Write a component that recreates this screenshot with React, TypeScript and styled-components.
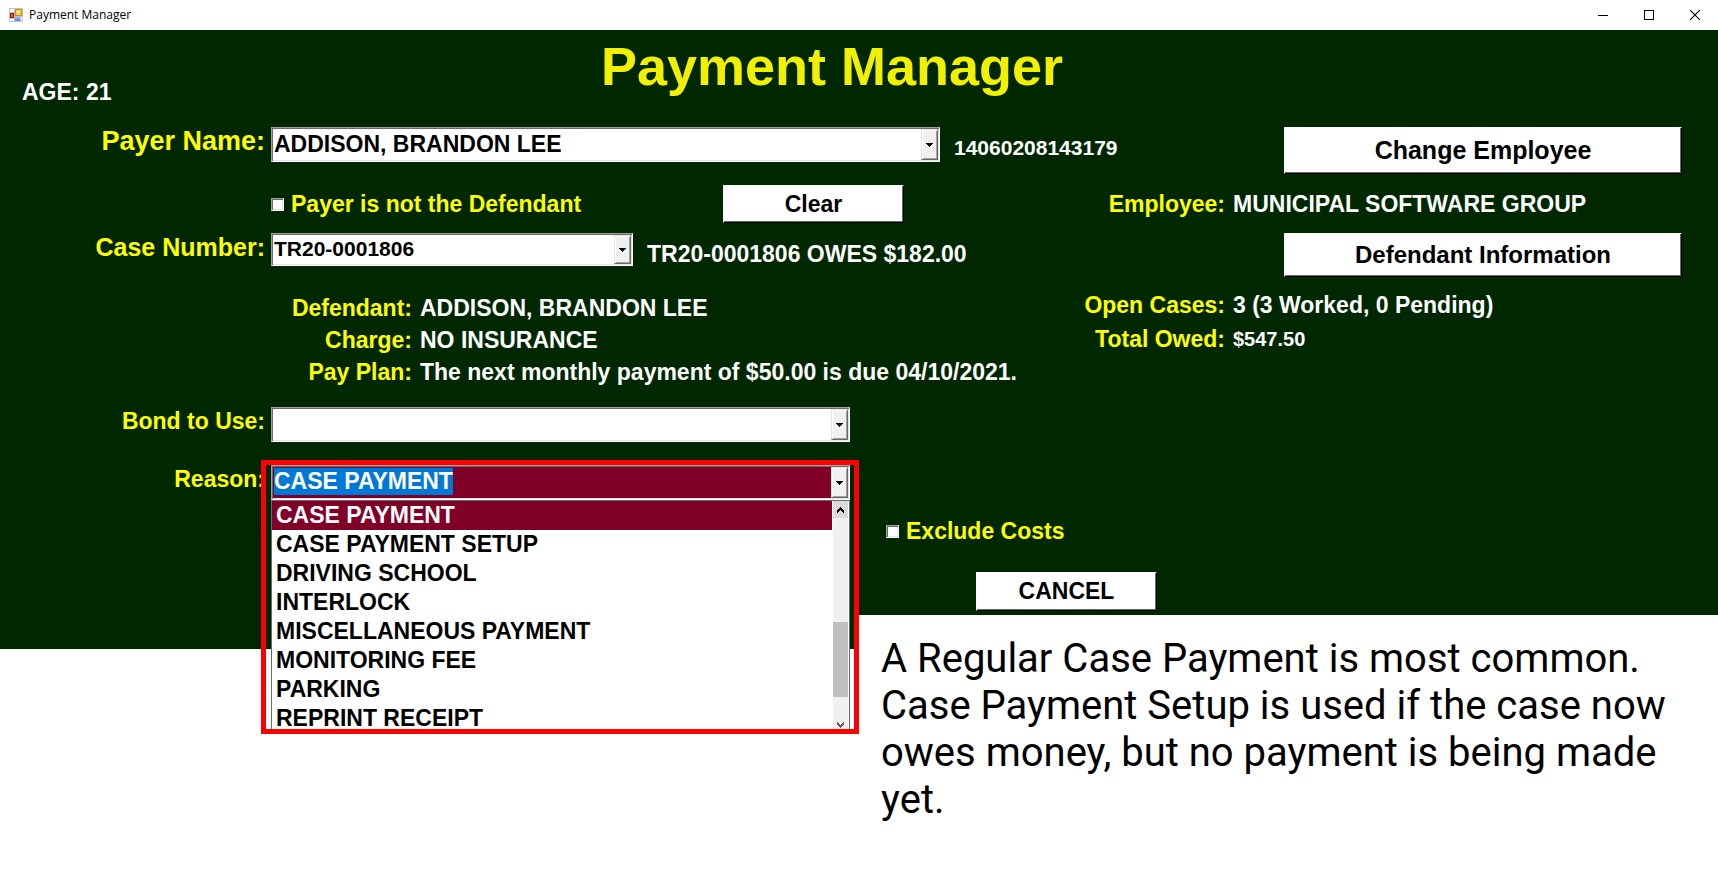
import React, { useEffect, useRef } from "react";
import styled, { createGlobalStyle, css } from "styled-components";

const GlobalStyle = createGlobalStyle`
  *, *::before, *::after { box-sizing: border-box; }
  body {
    margin: 0;
    background: #fff;
    font-family: "Liberation Sans", Arial, sans-serif;
  }
`;

const yellow = "#ffff00";
const green = "#002800";
const maroon = "#800028";

const sunken = css`
  border: 1px solid;
  border-color: #a0a0a0 #fff #fff #a0a0a0;
  box-shadow: inset 1px 1px 0 #696969, inset -1px -1px 0 #e3e3e3;
`;

const Page = styled.div`
  min-height: 100vh;
`;

const TitleBar = styled.header`
  display: flex;
  align-items: center;
  height: 30px;
  padding-left: 9px;
  background: #fff;
`;

const WindowTitle = styled.span`
  margin-left: 6px;
  font: 12px/16px "Open Sans", "Noto Sans", sans-serif;
  color: #000;
`;

const WindowControls = styled.div`
  display: flex;
  margin-left: auto;
  height: 28px;
`;

const WindowButton = styled.button`
  display: flex;
  align-items: center;
  justify-content: center;
  width: 46px;
  padding: 0;
  border: 0;
  background: transparent;
`;

const Form = styled.main`
  position: relative;
  height: 619px;
  padding-right: 36px;
  background: ${green};
  font-weight: 700;
  font-size: 23px;
  color: #fff;
`;

const Heading = styled.div`
  display: grid;
  grid-template-columns: 1fr auto 1fr;
  height: 97px;
  padding-right: 18px;
`;

const Age = styled.div`
  padding: 48px 0 0 22px;
  line-height: 28px;
`;

const Title = styled.h1`
  margin: 0;
  font-size: 54px;
  line-height: 72px;
  color: #f0f000;
`;

const Row = styled.div<{ $height: number; $gap: number }>`
  display: flex;
  align-items: flex-start;
  min-height: ${(p) => p.$height}px;
  margin-bottom: ${(p) => p.$gap}px;
`;

const FieldLabel = styled.label<{ $size?: number }>`
  flex: none;
  width: 271px;
  padding-right: 6px;
  text-align: right;
  font-size: ${(p) => p.$size ?? 23}px;
  line-height: 28px;
  color: ${yellow};
`;

const SideNote = styled.span<{ $size?: number }>`
  margin-left: 14px;
  font-size: ${(p) => p.$size ?? 23}px;
  line-height: 42px;
  white-space: nowrap;
`;

const ComboFrame = styled.div<{ $width: number; $height: number; $fill?: string }>`
  ${sunken}
  flex: none;
  display: grid;
  grid-template-columns: 1fr 17px;
  width: ${(p) => p.$width}px;
  height: ${(p) => p.$height}px;
  padding: 1px;
  background: ${(p) => p.$fill ?? "#fff"};
`;

const ComboSelect = styled.select<{ $size?: number }>`
  grid-area: 1 / 1 / 2 / 3;
  appearance: none;
  width: 100%;
  padding: 0 18px 2px 1px;
  border: 0;
  outline: 0;
  background: transparent;
  font: 700 ${(p) => p.$size ?? 23}px "Liberation Sans", Arial, sans-serif;
  color: #000;
`;

const ComboArrow = styled.span`
  grid-area: 1 / 2 / 2 / 3;
  display: flex;
  align-items: center;
  justify-content: center;
  border: 1px solid;
  border-color: #e3e3e3 #696969 #696969 #e3e3e3;
  box-shadow: inset 1px 1px 0 #fff, inset -1px -1px 0 #a0a0a0;
  background: #f0f0f0;
  pointer-events: none;
`;

const PushButton = styled.button<{ $width: number; $height: number; $size?: number }>`
  flex: none;
  width: ${(p) => p.$width}px;
  height: ${(p) => p.$height}px;
  padding: 0;
  border: 1px solid;
  border-color: #fff #000 #000 #fff;
  box-shadow: inset -1px -1px 0 #696969;
  background: #fff;
  font: 700 ${(p) => p.$size ?? 23}px "Liberation Sans", Arial, sans-serif;
  color: #000;
`;

const RightSlot = styled.div`
  display: flex;
  margin-left: auto;
`;

const CheckLabel = styled.label`
  display: flex;
  align-items: center;
  gap: 7px;
  line-height: 38px;
  color: ${yellow};
`;

const CheckBox = styled.input`
  ${sunken}
  appearance: none;
  width: 13px;
  height: 13px;
  margin: 0;
  background: #fff;
`;

const CheckSlot = styled.div`
  width: 452px;
  margin-left: 271px;
`;

const Facts = styled.dl<{ $label: number; $line: number }>`
  display: grid;
  grid-template-columns: ${(p) => p.$label}px 1fr;
  column-gap: 8px;
  margin: 0;
  line-height: ${(p) => p.$line}px;
  white-space: nowrap;
`;

const CaseFacts = styled(Facts)`
  padding-top: 4px;
`;

const AccountFacts = styled(Facts)`
  width: 598px;
  margin-left: auto;
`;

const Term = styled.dt`
  text-align: right;
  color: ${yellow};
`;

const Value = styled.dd<{ $size?: number }>`
  margin: 0;
  font-size: ${(p) => p.$size ?? 23}px;
`;

const ReasonField = styled.div`
  position: relative;
  z-index: 2;
  flex: none;
  width: 579px;
`;

const ReasonInput = styled.input`
  width: 100%;
  min-width: 0;
  height: 27px;
  margin: 1px 0 0 1px;
  padding: 0;
  border: 0;
  outline: 0;
  background: transparent;
  font: 700 23px "Liberation Sans", Arial, sans-serif;
  color: #fff;
  &::selection {
    background: #0078d7;
    color: #fff;
  }
`;

const DropDown = styled.div`
  position: absolute;
  top: 100%;
  left: 0;
  display: grid;
  grid-template-columns: 1fr 15px;
  column-gap: 1px;
  width: 100%;
  border: 1px solid #696969;
  border-width: 1px 1px 0 1px;
  padding-right: 1px;
  background: #fff;
`;

const OptionList = styled.ul`
  margin: 0;
  padding: 0;
  list-style: none;
`;

const Option = styled.li<{ $active: boolean }>`
  height: 29px;
  padding-left: 4px;
  line-height: 28px;
  background: ${(p) => (p.$active ? maroon : "#fff")};
  color: ${(p) => (p.$active ? "#fff" : "#000")};
`;

const ScrollBar = styled.div`
  display: flex;
  flex-direction: column;
  background: #f0f0f0;
`;

const ScrollButton = styled.button<{ $hot?: boolean }>`
  display: flex;
  align-items: center;
  justify-content: center;
  width: 15px;
  height: 17px;
  padding: 0;
  border: 0;
  background: ${(p) => (p.$hot ? "#dadada" : "#f0f0f0")};
`;

const ScrollThumb = styled.div`
  height: 75px;
  margin: 104px 0 19px;
  background: #c0c0c0;
`;

const Highlight = styled.div`
  position: absolute;
  top: -5px;
  left: -10px;
  width: 598px;
  height: 274px;
  border: 5px solid #ff0000;
  pointer-events: none;
`;

const Actions = styled.div`
  display: flex;
  flex-direction: column;
  gap: 22px;
  padding: 47px 0 0 36px;
`;

const CancelSlot = styled.div`
  padding-left: 90px;
`;

const Callout = styled.aside`
  position: absolute;
  top: calc(100% - 34px);
  left: 859px;
  right: 0;
  padding: 20px 30px 20px 22px;
  background: #fff;
  font: 400 40px/47px Roboto, sans-serif;
  color: #000;
`;

const reasons = [
  "CASE PAYMENT",
  "CASE PAYMENT SETUP",
  "DRIVING SCHOOL",
  "INTERLOCK",
  "MISCELLANEOUS PAYMENT",
  "MONITORING FEE",
  "PARKING",
  "REPRINT RECEIPT",
];

function DownArrow() {
  return (
    <ComboArrow aria-hidden="true">
      <svg width="7" height="4" viewBox="0 0 7 4" shapeRendering="crispEdges">
        <path d="M0 0h7v1h-1v1h-1v1h-1v1h-1v-1h-1v-1h-1v-1h-1z" fill="#000" />
      </svg>
    </ComboArrow>
  );
}

function Chevron({ down, color }: { down?: boolean; color: string }) {
  return (
    <svg width="7" height="6" viewBox="0 0 7 6" aria-hidden="true" shapeRendering="crispEdges">
      <path
        d={
          down
            ? "M0 0h1v1h1v1h1v1h1v-1h1v-1h1v-1h1v3h-1v1h-1v1h-1v1h-1v-1h-1v-1h-1v-1h-1z"
            : "M0 6v-3h1v-1h1v-1h1v-1h1v1h1v1h1v1h1v3h-1v-1h-1v-1h-1v-1h-1v1h-1v1h-1v1z"
        }
        fill={color}
      />
    </svg>
  );
}

interface ComboProps {
  id: string;
  value: string;
  width: number;
  height: number;
  size?: number;
}

function Combo({ id, value, width, height, size }: ComboProps) {
  return (
    <ComboFrame $width={width} $height={height}>
      <ComboSelect id={id} defaultValue={value} $size={size}>
        <option value={value}>{value}</option>
      </ComboSelect>
      <DownArrow />
    </ComboFrame>
  );
}

function AppIcon() {
  return (
    <svg width="14" height="14" viewBox="0 0 14 14" aria-hidden="true">
      <path d="M.5 .5h13v13h-13zM5.500 .5v13M.5 4.500h5M5.500 8.500h8M.5 10.500h5M11.500 8v5.500" fill="#fff" stroke="#c0c0c8" />
      <rect x="6.500" y="1.500" width="6" height="6" fill="#fbd04a" stroke="#c8900c" />
      <rect x="8" y="3" width="3" height="2" fill="#fdeaa0" />
      <rect x="1.500" y="5.500" width="3" height="4" fill="#e0584c" stroke="#a81810" />
      <rect x="6" y="9" width="5" height="4" fill="#5f8ce8" />
      <rect x="6" y="9" width="5" height="2" fill="#8ab0f6" />
    </svg>
  );
}

export default function App() {
  const reasonRef = useRef<HTMLInputElement>(null);

  useEffect(() => {
    reasonRef.current?.focus({ preventScroll: true });
    reasonRef.current?.select();
  }, []);

  return (
    <Page>
      <GlobalStyle />
      <TitleBar>
        <AppIcon />
        <WindowTitle>Payment Manager</WindowTitle>
        <WindowControls>
          <WindowButton aria-label="Minimize">
            <svg width="10" height="10" viewBox="0 0 10 10" shapeRendering="crispEdges">
              <path d="M0 5h10v1H0z" fill="#000" />
            </svg>
          </WindowButton>
          <WindowButton aria-label="Maximize">
            <svg width="10" height="10" viewBox="0 0 10 10" shapeRendering="crispEdges">
              <path d="M.5 .5h9v9h-9z" fill="none" stroke="#000" />
            </svg>
          </WindowButton>
          <WindowButton aria-label="Close">
            <svg width="10" height="10" viewBox="0 0 10 10">
              <path d="M0 0L10 10M10 0L0 10" fill="none" stroke="#000" strokeWidth="1.100" />
            </svg>
          </WindowButton>
        </WindowControls>
      </TitleBar>

      <Form>
        <Heading>
          <Age>AGE: 21</Age>
          <Title>Payment Manager</Title>
        </Heading>

        <Row $height={47} $gap={11}>
          <FieldLabel htmlFor="payer" $size={27}>Payer Name:</FieldLabel>
          <Combo id="payer" value="ADDISON, BRANDON LEE" width={669} height={35} />
          <SideNote $size={21}>14060208143179</SideNote>
          <RightSlot>
            <PushButton $width={398} $height={47} $size={25}>Change Employee</PushButton>
          </RightSlot>
        </Row>

        <Row $height={38} $gap={10}>
          <CheckSlot>
            <CheckLabel>
              <CheckBox type="checkbox" />
              Payer is not the Defendant
            </CheckLabel>
          </CheckSlot>
          <PushButton $width={181} $height={38}>Clear</PushButton>
          <AccountFacts $label={141} $line={38}>
            <Term>Employee:</Term>
            <Value>MUNICIPAL SOFTWARE GROUP</Value>
          </AccountFacts>
        </Row>

        <Row $height={44} $gap={11}>
          <FieldLabel htmlFor="case" $size={25}>Case Number:</FieldLabel>
          <Combo id="case" value="TR20-0001806" width={362} height={33} size={21} />
          <SideNote>TR20-0001806 OWES $182.00</SideNote>
          <RightSlot>
            <PushButton $width={398} $height={44} $size={24}>Defendant Information</PushButton>
          </RightSlot>
        </Row>

        <Row $height={100} $gap={19}>
          <CaseFacts $label={412} $line={32}>
            <Term>Defendant:</Term>
            <Value>ADDISON, BRANDON LEE</Value>
            <Term>Charge:</Term>
            <Value>NO INSURANCE</Value>
            <Term>Pay Plan:</Term>
            <Value>The next monthly payment of $50.00 is due 04/10/2021.</Value>
          </CaseFacts>
          <AccountFacts $label={141} $line={34}>
            <Term>Open Cases:</Term>
            <Value>3 (3 Worked, 0 Pending)</Value>
            <Term>Total Owed:</Term>
            <Value $size={20}>$547.50</Value>
          </AccountFacts>
        </Row>

        <Row $height={35} $gap={23}>
          <FieldLabel htmlFor="bond">Bond to Use:</FieldLabel>
          <Combo id="bond" value="" width={579} height={35} />
        </Row>

        <Row $height={35} $gap={0}>
          <FieldLabel htmlFor="reason">Reason:</FieldLabel>
          <ReasonField>
            <ComboFrame $width={579} $height={35} $fill={maroon}>
              <ReasonInput
                id="reason"
                ref={reasonRef}
                role="combobox"
                aria-expanded="true"
                aria-controls="reason-list"
                defaultValue="CASE PAYMENT"
              />
              <DownArrow />
            </ComboFrame>
            <DropDown>
              <OptionList id="reason-list" role="listbox" aria-label="Reason">
                {reasons.map((reason, index) => (
                  <Option key={reason} role="option" aria-selected={index === 0} $active={index === 0}>
                    {reason}
                  </Option>
                ))}
              </OptionList>
              <ScrollBar>
                <ScrollButton aria-label="Scroll up" $hot>
                  <Chevron color="#000" />
                </ScrollButton>
                <ScrollThumb />
                <ScrollButton aria-label="Scroll down">
                  <Chevron down color="#606060" />
                </ScrollButton>
              </ScrollBar>
            </DropDown>
            <Highlight />
          </ReasonField>
          <Actions>
            <CheckLabel>
              <CheckBox type="checkbox" />
              Exclude Costs
            </CheckLabel>
            <CancelSlot>
              <PushButton $width={181} $height={39}>CANCEL</PushButton>
            </CancelSlot>
          </Actions>
        </Row>

        <Callout>
          A Regular Case Payment is most common. Case Payment Setup is used if the case now owes
          money, but no payment is being made yet.
        </Callout>
      </Form>
    </Page>
  );
}
